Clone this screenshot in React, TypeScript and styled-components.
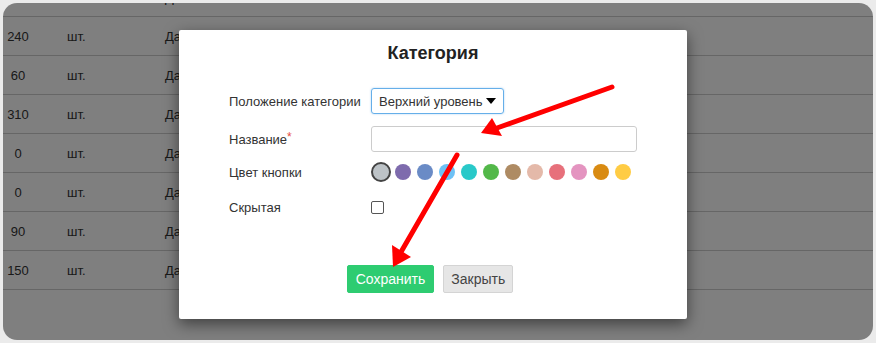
import React from "react";
import styled, { createGlobalStyle } from "styled-components";

const Global = createGlobalStyle`
  html, body { margin: 0; padding: 0; }
  body {
    background: #ebebeb;
    font-family: "Liberation Sans", Arial, sans-serif;
    width: 876px;
    height: 343px;
    overflow: hidden;
  }
`;

const Page = styled.div`
  position: relative;
  margin: 3px;
  height: 337px;
  border-radius: 14px;
  background: #fff;
  overflow: hidden;
`;

const Table = styled.div`
  margin-top: -25px;
  display: flex;
  flex-direction: column;
`;

const Row = styled.div`
  display: grid;
  grid-template-columns: 30px 64px 1fr;
  column-gap: 34px;
  align-items: center;
  height: 38px;
  border-bottom: 1px solid #cccccc;
  font-size: 13px;
  color: #333;
`;

const Cell = styled.div<{ $center?: boolean }>`
  text-align: ${(p) => (p.$center ? "center" : "left")};
  white-space: nowrap;
`;

const Overlay = styled.div`
  position: absolute;
  inset: 0;
  background: rgba(0, 0, 0, 0.5);
`;

const Modal = styled.div`
  position: absolute;
  left: 176px;
  top: 27px;
  width: 508px;
  height: 289px;
  background: #fff;
  border-radius: 2px;
  box-shadow: 0 5px 15px rgba(0, 0, 0, 0.5);
  display: flex;
  flex-direction: column;
  box-sizing: border-box;
`;

const Title = styled.h4`
  margin: 0;
  padding-top: 13px;
  line-height: 20px;
  font-size: 18px;
  font-weight: bold;
  color: #222;
  text-align: center;
`;

const Form = styled.div`
  margin-top: 19px;
  padding-left: 50px;
  display: flex;
  flex-direction: column;
`;

const FormRow = styled.div<{ $h: number }>`
  display: grid;
  grid-template-columns: 142px 1fr;
  align-items: center;
  height: ${(p) => p.$h}px;
`;

const Label = styled.div`
  font-size: 13px;
  color: #333;
  white-space: nowrap;
`;

const Req = styled.span`
  color: #e74c3c;
  position: relative;
  top: -3px;
  font-size: 12px;
`;

const Select = styled.div`
  box-sizing: border-box;
  width: 133px;
  height: 26px;
  border: 1px solid #66afe9;
  border-radius: 3px;
  box-shadow: 0 0 2px rgba(102, 175, 233, 0.6);
  display: flex;
  align-items: center;
  justify-content: space-between;
  padding: 0 7px 0 7px;
  font-size: 13px;
  color: #333;
  white-space: nowrap;
`;

const Caret = styled.span`
  flex: none;
  width: 0;
  height: 0;
  border-left: 5px solid transparent;
  border-right: 5px solid transparent;
  border-top: 6px solid #000;
`;

const Input = styled.input`
  box-sizing: border-box;
  width: 266px;
  height: 26px;
  border: 1px solid #cccccc;
  border-radius: 3px;
  outline: none;
  padding: 0 6px;
  font-family: inherit;
`;

const Swatches = styled.div`
  display: flex;
  align-items: center;
  margin-left: -1px;
`;

const Swatch = styled.span<{ $c: string; $active?: boolean }>`
  width: 22px;
  height: 22px;
  display: flex;
  align-items: center;
  justify-content: center;
  &::before {
    content: "";
    box-sizing: border-box;
    width: ${(p) => (p.$active ? 20 : 16)}px;
    height: ${(p) => (p.$active ? 20 : 16)}px;
    border-radius: 50%;
    background: ${(p) => p.$c};
    border: ${(p) => (p.$active ? "2.5px solid #444" : "none")};
  }
`;

const Check = styled.input`
  appearance: none;
  display: block;
  margin: 0;
  width: 13px;
  height: 13px;
  border: 1px solid #555;
  border-radius: 2px;
  background: #fff;
`;

const Footer = styled.div`
  margin-top: 37px;
  display: flex;
  justify-content: center;
  gap: 9px;
  padding-right: 6px;
`;

const Button = styled.button<{ $primary?: boolean }>`
  height: 28px;
  padding: 0 ${(p) => (p.$primary ? 8 : 7)}px;
  border-radius: 2px;
  font-family: inherit;
  font-size: 14px;
  border: 1px solid ${(p) => (p.$primary ? "#2ecc71" : "#d4d4d4")};
  background: ${(p) => (p.$primary ? "#2ecc71" : "#e6e6e6")};
  color: ${(p) => (p.$primary ? "#fff" : "#444")};
`;

const Arrows = styled.svg`
  position: absolute;
  left: -3px;
  top: -3px;
  pointer-events: none;
`;

const rows = [
  ["", "", "Да"],
  ["240", "шт.", "Да"],
  ["60", "шт.", "Да"],
  ["310", "шт.", "Да"],
  ["0", "шт.", "Да"],
  ["0", "шт.", "Да"],
  ["90", "шт.", "Да"],
  ["150", "шт.", "Да"],
];

const colors = [
  "#bdc3c7",
  "#7e6bad",
  "#6a8bc6",
  "#6ec1f5",
  "#29c9c9",
  "#53b849",
  "#ae8b63",
  "#e4b9a9",
  "#e7707b",
  "#e494c0",
  "#d98b12",
  "#ffcc44",
];

export default function App() {
  return (
    <>
      <Global />
      <Page>
        <Table>
          {rows.map((r, i) => (
            <Row key={i}>
              <Cell $center>{r[0]}</Cell>
              <Cell>{r[1]}</Cell>
              <Cell>{r[2]}</Cell>
            </Row>
          ))}
        </Table>
        <Overlay />
        <Modal>
          <Title>Категория</Title>
          <Form>
            <FormRow $h={38}>
              <Label>Положение категории</Label>
              <Select>
                <span>Верхний уровень</span>
                <Caret />
              </Select>
            </FormRow>
            <FormRow $h={38}>
              <Label>
                Название<Req>*</Req>
              </Label>
              <Input />
            </FormRow>
            <FormRow $h={28}>
              <Label>Цвет кнопки</Label>
              <Swatches>
                {colors.map((c, i) => (
                  <Swatch key={c} $c={c} $active={i === 0} />
                ))}
              </Swatches>
            </FormRow>
            <FormRow $h={42}>
              <Label>Скрытая</Label>
              <div>
                <Check type="checkbox" />
              </div>
            </FormRow>
          </Form>
          <Footer>
            <Button $primary>Сохранить</Button>
            <Button>Закрыть</Button>
          </Footer>
        </Modal>
        <Arrows width="876" height="343" viewBox="0 0 876 343">
          <g stroke="#ff0000" strokeWidth="5" strokeLinecap="round" fill="none">
            <line x1="612" y1="87" x2="497" y2="128" />
            <line x1="457" y1="155" x2="401" y2="252" />
          </g>
          <g fill="#ff0000">
            <polygon points="481,133 492,118 502,136" />
            <polygon points="393,267 392,245 411,257" />
          </g>
        </Arrows>
      </Page>
    </>
  );
}
